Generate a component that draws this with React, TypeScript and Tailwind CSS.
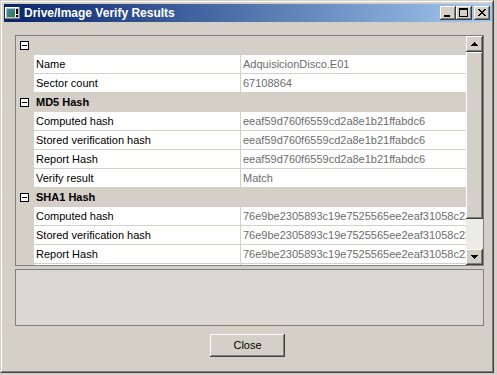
import React from "react";

const MD5 = "eeaf59d760f6559cd2a8e1b21ffabdc6";
const SHA1 = "76e9be2305893c19e7525565ee2eaf31058c22d4a1b0";

type Row = { cat?: boolean; label?: string; name?: string; value?: string };

const rows: Row[] = [
  { cat: true, label: "" },
  { name: "Name", value: "AdquisicionDisco.E01" },
  { name: "Sector count", value: "67108864" },
  { cat: true, label: "MD5 Hash" },
  { name: "Computed hash", value: MD5 },
  { name: "Stored verification hash", value: MD5 },
  { name: "Report Hash", value: MD5 },
  { name: "Verify result", value: "Match" },
  { cat: true, label: "SHA1 Hash" },
  { name: "Computed hash", value: SHA1 },
  { name: "Stored verification hash", value: SHA1 },
  { name: "Report Hash", value: SHA1 },
  { name: "Verify result", value: "Match" },
];

const bevel =
  "bg-[#d4d0c8] shadow-[inset_-1px_-1px_0_#404040,inset_1px_1px_0_#ffffff,inset_-2px_-2px_0_#808080,inset_2px_2px_0_#d4d0c8]";

function TitleBtn({ kind }: { kind: "min" | "max" | "close" }) {
  return (
    <div className={`w-[16px] h-[14px] ${bevel} relative`}>
      <svg width="16" height="14" className="absolute left-0 top-0" shapeRendering="crispEdges">
        {kind === "min" && <rect x="4" y="9" width="6" height="2" fill="#000" />}
        {kind === "max" && (
          <g fill="#000">
            <rect x="3" y="2" width="9" height="2" />
            <rect x="3" y="2" width="1" height="9" />
            <rect x="11" y="2" width="1" height="9" />
            <rect x="3" y="10" width="9" height="1" />
          </g>
        )}
        {kind === "close" && (
          <g fill="#000">
            {[0, 1, 2, 3, 4, 5, 6].map((i) => (
              <React.Fragment key={i}>
                <rect x={4 + i} y={3 + i} width="2" height="1" />
                <rect x={10 - i} y={3 + i} width="2" height="1" />
              </React.Fragment>
            ))}
          </g>
        )}
      </svg>
    </div>
  );
}

function ScrollBtn({ up, h }: { up: boolean; h: string }) {
  return (
    <div className={`w-[17px] ${h} ${bevel} relative flex items-center justify-center`}>
      <svg width="7" height="4" shapeRendering="crispEdges">
        {up ? (
          <g fill="#000">
            <rect x="3" y="0" width="1" height="1" />
            <rect x="2" y="1" width="3" height="1" />
            <rect x="1" y="2" width="5" height="1" />
            <rect x="0" y="3" width="7" height="1" />
          </g>
        ) : (
          <g fill="#000">
            <rect x="0" y="0" width="7" height="1" />
            <rect x="1" y="1" width="5" height="1" />
            <rect x="2" y="2" width="3" height="1" />
            <rect x="3" y="3" width="1" height="1" />
          </g>
        )}
      </svg>
    </div>
  );
}

function Minus() {
  return (
    <svg width="9" height="9" shapeRendering="crispEdges">
      <rect x="0.5" y="0.5" width="8" height="8" fill="#fff" stroke="#000" strokeWidth="1" />
      <rect x="2" y="4" width="5" height="1" fill="#000" />
    </svg>
  );
}

function AppIcon() {
  return (
    <svg width="16" height="12" shapeRendering="crispEdges">
      <defs>
        <linearGradient id="g1" x1="0" y1="0" x2="1" y2="1">
          <stop offset="0" stopColor="#3f8f9f" />
          <stop offset="1" stopColor="#2f7a4f" />
        </linearGradient>
      </defs>
      <rect x="0" y="0" width="15" height="12" fill="#c0c0c0" />
      <rect x="0" y="0" width="15" height="1" fill="#ffffff" />
      <rect x="0" y="0" width="1" height="12" fill="#ffffff" />
      <rect x="14" y="0" width="1" height="12" fill="#808080" />
      <rect x="0" y="11" width="15" height="1" fill="#808080" />
      <rect x="2" y="2" width="8" height="8" fill="url(#g1)" />
      <rect x="10" y="2" width="3" height="8" fill="#ffffff" />
      <rect x="11" y="2" width="2" height="5" fill="#000" />
      <rect x="11" y="8" width="2" height="2" fill="#000" />
    </svg>
  );
}

export default function App() {
  return (
    <div className="w-[497px] h-[375px] bg-[#d4d0c8] overflow-hidden font-['Liberation_Sans',Arial,sans-serif] text-[11px] text-black">
      <div className="w-[494px] h-[373px] border border-t-[#d4d0c8] border-l-[#d4d0c8] border-b-[#404040] border-r-[#404040]">
        <div className="w-full h-full border border-t-white border-l-white border-b-[#808080] border-r-[#808080] pt-[2px] pl-[2px] flex flex-col">
          {/* title bar */}
          <div className="h-[18px] w-[488px] flex items-center bg-gradient-to-r from-[#0a246a] to-[#a6caf0]">
            <div className="ml-[1px] w-[16px] h-[12px]">
              <AppIcon />
            </div>
            <span className="ml-[3px] text-white font-bold text-[12px] leading-[18px] whitespace-nowrap">
              Drive/Image Verify Results
            </span>
            <div className="ml-auto flex items-center mr-[2px]">
              <TitleBtn kind="min" />
              <TitleBtn kind="max" />
              <div className="ml-[2px]">
                <TitleBtn kind="close" />
              </div>
            </div>
          </div>

          {/* content */}
          <div className="pl-[11px] pt-[13px] flex flex-col">
            {/* property grid */}
            <div className="w-[469px] h-[231px] border border-[#808080] flex bg-white">
              <div className="w-[450px] h-[229px] overflow-hidden flex flex-col">
                {rows.map((r, i) =>
                  r.cat ? (
                    <div key={i} className="h-[19px] shrink-0 flex bg-[#d4d0c8]">
                      <div className="w-[18px] pl-[4px] pt-[5px]">
                        <Minus />
                      </div>
                      <div className="pl-[2px] font-bold leading-[19px] whitespace-nowrap">{r.label}</div>
                    </div>
                  ) : (
                    <div key={i} className="h-[19px] shrink-0 flex">
                      <div className="w-[18px] bg-[#d4d0c8]" />
                      <div className="flex w-[432px] border-b border-[#d4d0c8] bg-white">
                        <div className="w-[207px] border-r border-[#d4d0c8] pl-[2px] leading-[18px] whitespace-nowrap overflow-hidden">
                          {r.name}
                        </div>
                        <div className="w-[225px] pl-[2px] leading-[18px] whitespace-nowrap overflow-hidden text-[#6d6d6d]">
                          {r.value}
                        </div>
                      </div>
                    </div>
                  )
                )}
              </div>
              <div className="w-[17px] h-[229px] flex flex-col bg-[#ecebe7]">
                <ScrollBtn up h="h-[16px]" />
                <div className={`w-[17px] h-[167px] ${bevel}`} />
                <div className="flex-1" />
                <ScrollBtn up={false} h="h-[16px]" />
              </div>
            </div>

            {/* description */}
            <div className="mt-[3px] w-[469px] h-[57px] border border-[#808080] bg-[#dad7d0]" />

            {/* close */}
            <div
              className={`mt-[8px] ml-[195px] w-[75px] h-[23px] ${bevel} flex items-center justify-center`}
            >
              <span className="leading-[23px]">Close</span>
            </div>
          </div>
        </div>
      </div>
    </div>
  );
}
